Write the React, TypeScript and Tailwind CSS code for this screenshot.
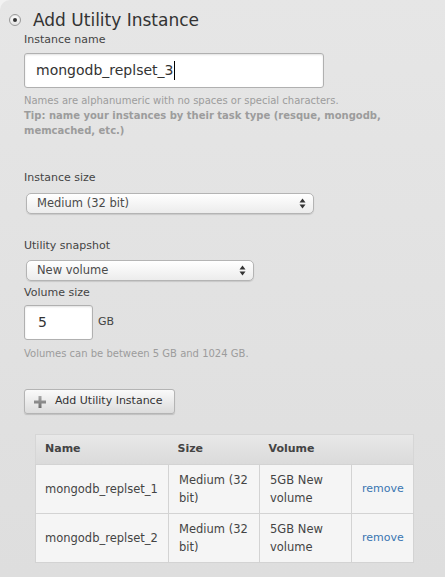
import React from "react";

const font = "font-['DejaVu_Sans',_'Liberation_Sans',_sans-serif]";

const UpDownArrows: React.FC = () => (
  <svg width="7" height="11" viewBox="0 0 7 11" className="shrink-0">
    <path d="M3.5 0.5 L6.5 4.5 L0.5 4.5 Z" fill="#333" />
    <path d="M3.5 10.5 L6.5 6.5 L0.5 6.5 Z" fill="#333" />
  </svg>
);

const FakeSelect: React.FC<{ value: string; width: string }> = ({ value, width }) => (
  <div
    className={`${width} ml-[2px] h-[21px] flex items-center justify-between pl-[10px] pr-[7px] rounded-[5px] border border-[#b4b4b4] bg-gradient-to-b from-white to-[#ececec] shadow-[0_1px_1px_rgba(0,0,0,0.12)] text-[11.5px] text-[#4a4a4a]`}
  >
    <span>{value}</span>
    <UpDownArrows />
  </div>
);

const PlusIcon: React.FC = () => (
  <svg width="12" height="12" viewBox="0 0 12 12">
    <defs>
      <linearGradient id="plusG" x1="0" y1="0" x2="0" y2="1">
        <stop offset="0" stopColor="#a8a8a8" />
        <stop offset="1" stopColor="#6e6e6e" />
      </linearGradient>
    </defs>
    <path d="M4.5 0 H7.5 V4.5 H12 V7.5 H7.5 V12 H4.5 V7.5 H0 V4.5 H4.5 Z" fill="url(#plusG)" />
  </svg>
);

const rows = [
  { name: "mongodb_replset_1", size: "Medium (32 bit)", volume: "5GB New volume" },
  { name: "mongodb_replset_2", size: "Medium (32 bit)", volume: "5GB New volume" },
];

export default function App() {
  return (
    <div className={`${font} w-[445px] h-[577px] bg-[#f2f2f2] overflow-hidden`}>
      <div className="h-full rounded-tl-[10px] bg-gradient-to-b from-[#e6e6e6] to-[#dedede] pt-[9px]">
        {/* Title row with radio */}
        <div className="flex items-center h-[22px] pl-[9px]">
          <span className="w-[12px] h-[12px] rounded-full border border-[#9a9a9a] bg-gradient-to-b from-white to-[#e4e4e4] flex items-center justify-center shadow-[inset_0_1px_1px_rgba(0,0,0,0.1)]">
            <span className="w-[4px] h-[4px] rounded-full bg-[#333]" />
          </span>
          <h1 className="ml-[12px] text-[17px] leading-[22px] text-[#333]">Add Utility Instance</h1>
        </div>

        <div className="pl-[24px]">
          <div className="text-[11px] leading-[14px] text-[#444] mt-[2px]">Instance name</div>
          <div className="mt-[6px] w-[300px] h-[35px] rounded-[3px] border border-[#b0b0b0] bg-white shadow-[inset_0_1px_2px_rgba(0,0,0,0.12)] flex items-center pl-[11px] text-[14px] text-[#333]">
            <span>mongodb_replset_3</span>
            <span className="ml-[1px] w-[1px] h-[19px] bg-black" />
          </div>
          <div className="mt-[5px] text-[10px] leading-[15px] text-[#9c9c9c]">
            <p>Names are alphanumeric with no spaces or special characters.</p>
            <p className="font-bold">
              Tip: name your instances by their task type (resque, mongodb, memcached, etc.)
            </p>
          </div>

          <div className="mt-[33px] text-[11px] leading-[14px] text-[#444]">Instance size</div>
          <div className="mt-[8px]">
            <FakeSelect value="Medium (32 bit)" width="w-[288px]" />
          </div>

          <div className="mt-[25px] text-[11px] leading-[14px] text-[#444]">Utility snapshot</div>
          <div className="mt-[7px]">
            <FakeSelect value="New volume" width="w-[228px]" />
          </div>

          <div className="mt-[5px] text-[11px] leading-[14px] text-[#444]">Volume size</div>
          <div className="mt-[5px] flex items-center">
            <div className="w-[69px] h-[35px] rounded-[3px] border border-[#b0b0b0] bg-white shadow-[inset_0_1px_2px_rgba(0,0,0,0.12)] flex items-center pl-[13px] text-[14px] text-[#333]">
              5
            </div>
            <span className="ml-[5px] text-[11px] text-[#444]">GB</span>
          </div>
          <p className="mt-[6px] text-[10px] leading-[15px] text-[#9c9c9c]">
            Volumes can be between 5 GB and 1024 GB.
          </p>

          <button className="mt-[28px] h-[25px] w-[151px] flex items-center pl-[9px] rounded-[3px] border border-[#b4b4b4] bg-gradient-to-b from-[#fafafa] to-[#dcdcdc] shadow-[0_1px_1px_rgba(0,0,0,0.15)] text-[11px] text-[#333]">
            <PlusIcon />
            <span className="ml-[9px]">Add Utility Instance</span>
          </button>

          {/* Utility instances already added */}
          <table className="mt-[20px] ml-[11px] w-[378px] border-collapse border border-[#d6d6d6] text-[11.5px] text-[#444] table-fixed">
            <colgroup>
              <col className="w-[133px]" />
              <col className="w-[91px]" />
              <col className="w-[92px]" />
              <col className="w-[62px]" />
            </colgroup>
            <thead>
              <tr className="h-[30px] bg-gradient-to-b from-[#e8e8e8] to-[#dadada] text-left">
                <th className="pl-[9px] font-bold text-[11px]">Name</th>
                <th className="pl-[9px] font-bold text-[11px]">Size</th>
                <th className="pl-[9px] font-bold text-[11px]">Volume</th>
                <th />
              </tr>
            </thead>
            <tbody>
              {rows.map((r) => (
                <tr key={r.name} className="h-[49px] bg-[#f5f5f5]">
                  <td className="border border-[#d3d3d3] pl-[9px] leading-[18px]">{r.name}</td>
                  <td className="border border-[#d3d3d3] pl-[10px] pr-[6px] leading-[18px]">{r.size}</td>
                  <td className="border border-[#d3d3d3] pl-[10px] pr-[6px] leading-[18px]">{r.volume}</td>
                  <td className="border border-[#d3d3d3] pl-[10px] leading-[18px] text-[11px] text-[#3a76b2]">
                    remove
                  </td>
                </tr>
              ))}
            </tbody>
          </table>
        </div>
      </div>
    </div>
  );
}
